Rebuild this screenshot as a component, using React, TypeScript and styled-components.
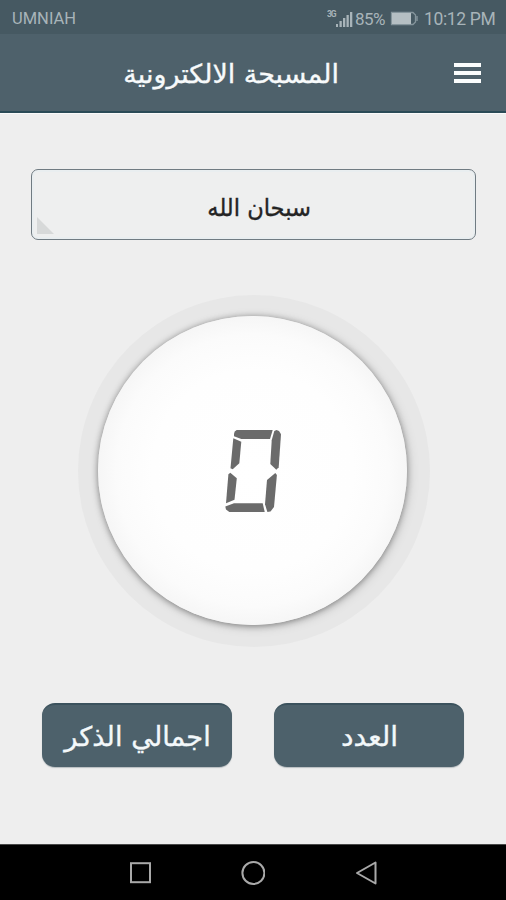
import React from "react";
import styled, { createGlobalStyle } from "styled-components";

const GlobalStyle = createGlobalStyle`
  *, *::before, *::after { box-sizing: border-box; }
  html, body { margin: 0; padding: 0; background: #eeeeee; }
  button { font: inherit; border: 0; padding: 0; margin: 0; background: none; }
`;

const Screen = styled.div`
  width: 506px;
  height: 900px;
  display: flex;
  flex-direction: column;
  overflow: hidden;
  background: #eeeeee;
  font-family: "DejaVu Sans", sans-serif;
`;

const StatusBar = styled.div`
  flex: 0 0 34px;
  display: flex;
  align-items: center;
  justify-content: space-between;
  padding: 3px 11px 0 12px;
  background: #465962;
  color: #a8b4b9;
  font-family: Roboto, sans-serif;
`;

const Carrier = styled.span`
  font-size: 16.5px;
  letter-spacing: 0;
`;

const Indicators = styled.div`
  display: flex;
  align-items: center;
  font-size: 17.5px;
`;

const Percent = styled.span`
  width: 31px;
  margin: 0 4px 0 1px;
  font-size: 17px;
  letter-spacing: -0.6px;
`;

const Clock = styled.span`
  width: 71px;
  margin-left: 5px;
  letter-spacing: -0.35px;
  white-space: nowrap;
`;

const Header = styled.header`
  flex: 0 0 79px;
  display: grid;
  grid-template-columns: 1fr 218px 114px 28px 24px;
  align-items: center;
  background: #4e616b;
  border-bottom: 2px solid #2b4b57;
  box-shadow: 0 1px 0 #fafafa;
`;

const ArabicText = styled.span<{ $size: number; $stretch?: number; $drop?: number }>`
  display: inline-block;
  font-size: ${(p) => p.$size}px;
  line-height: 1.2;
  white-space: nowrap;
  -webkit-text-stroke: 0.35px currentColor;
  transform: translateY(${(p) => p.$drop ?? 0}px) scaleX(${(p) => p.$stretch ?? 1});
`;

const Title = styled.h1`
  grid-column: 2;
  margin: 0;
  display: flex;
  justify-content: center;
  color: #f7fafb;
  font-weight: 400;
`;

const MenuButton = styled.button`
  grid-column: 4;
  height: 20px;
  display: flex;
  flex-direction: column;
  justify-content: space-between;
`;

const MenuLine = styled.span`
  width: 27px;
  height: 4px;
  background: #fbfdfd;
`;

const Main = styled.main`
  flex: 1;
  display: flex;
  flex-direction: column;
  align-items: center;
  padding-top: 56px;
`;

const Picker = styled.button`
  position: relative;
  width: 445px;
  height: 71px;
  display: flex;
  align-items: center;
  justify-content: center;
  padding-left: 12px;
  margin-left: 1px;
  border: 1.5px solid #707b82;
  border-radius: 7px;
  background: #eeefef;
  box-shadow: inset 0 0 0 2px #e9eef0;
  color: #242424;
`;

const PickerCorner = styled.span`
  position: absolute;
  left: 5px;
  bottom: 5px;
  width: 17px;
  height: 17px;
  background: #d7d9d9;
  clip-path: polygon(0 0, 100% 100%, 0 100%);
`;

const Dial = styled.div`
  width: 352px;
  height: 352px;
  margin: 55px 0 0 2px;
  display: flex;
  align-items: center;
  justify-content: center;
  padding: 0 3px 1px 0;
  border-radius: 50%;
  background: #e7e7e7;
`;

const DialFace = styled.button`
  width: 309px;
  height: 309px;
  display: flex;
  align-items: center;
  justify-content: center;
  padding-top: 3px;
  padding-left: 3px;
  border-radius: 50%;
  background: radial-gradient(circle closest-side, #ffffff 0%, #fefefe 65%, #fbfbfb 88%, #f6f6f6 100%);
  box-shadow: 0 1px 6px rgba(0, 0, 0, 0.4), 2px 2px 12px rgba(0, 0, 0, 0.14);
`;

const Readout = styled.span`
  display: grid;
  width: 60px;
  height: 88px;
`;

const Segment = styled.span<{ $shape: string }>`
  grid-area: 1 / 1;
  background: #6b6b6b;
  clip-path: polygon(${(p) => p.$shape});
`;

const Actions = styled.div`
  display: flex;
  gap: 42px;
  margin: 56px 0 0 0;
`;

const ActionButton = styled.button`
  width: 190px;
  height: 64px;
  display: flex;
  align-items: center;
  justify-content: center;
  border-radius: 13px;
  background: #4d616b;
  border-top: 2px solid #3b525d;
  box-shadow: 0 1px 1px rgba(60, 80, 90, 0.3);
  color: #f3f8fa;
`;

const NavBar = styled.nav`
  flex: 0 0 56px;
  display: grid;
  grid-template-columns: 24px 24px 24px;
  column-gap: 89px;
  justify-content: center;
  align-items: center;
  background: #000000;
  border-top: 1px solid #484848;
`;

const SEGMENTS: Record<string, string> = {
  top: "10px 5.7px, 10.7px 3.4px, 12.7px 2px, 48.7px 2px, 46px 11px, 17.3px 11px, 10px 8.3px",
  upperRight: "50.3px 3px, 52.5px 2px, 55px 3px, 57px 6.3px, 54.7px 39.3px, 52.3px 41.7px, 46.3px 36px, 47.7px 12.3px",
  upperLeft: "9.3px 10.3px, 17.3px 13.7px, 15.3px 35.3px, 8.7px 41.3px, 6.5px 40.3px",
  lowerLeft: "6.3px 44.8px, 12.8px 50.3px, 10.5px 71.7px, 2px 75.3px, 4.4px 46.3px",
  bottom: "1.3px 78.4px, 10px 75.3px, 38.7px 75.3px, 40.7px 84px, 5.3px 84px, 2px 81.5px",
  lowerRight: "51.3px 45px, 52.9px 47px, 50px 79px, 46.5px 83.4px, 43.4px 84px, 41px 76.3px, 43px 52px",
};

const ZERO = ["top", "upperRight", "upperLeft", "lowerLeft", "bottom", "lowerRight"];

function SignalIcon() {
  return (
    <svg width="27" height="20" viewBox="0 0 27 20" fill="currentColor">
      <text x="0" y="8" fontFamily="Roboto, sans-serif" fontSize="8.5" fontWeight="700" textLength="9.5">3G</text>
      <rect x="9" y="15" width="2" height="3" />
      <rect x="12.5" y="12" width="2.3" height="6" />
      <rect x="16" y="9" width="2.3" height="9" />
      <rect x="19.5" y="6" width="2.3" height="12" />
      <rect x="23" y="3" width="2.3" height="15" />
    </svg>
  );
}

function BatteryIcon() {
  return (
    <svg width="29" height="16" viewBox="0 0 29 16">
      <path d="M1.5 1.5H23L25.5 4V11L23 13.5H1.5Z" fill="none" stroke="#85959c" strokeWidth="1.3" />
      <path d="M2 2H21V13H2Z" fill="#b5bfc3" />
      <path d="M27 5V10" stroke="#8a9aa1" strokeWidth="1.3" />
    </svg>
  );
}

export default function App() {
  return (
    <Screen>
      <GlobalStyle />
      <StatusBar>
        <Carrier>UMNIAH</Carrier>
        <Indicators>
          <SignalIcon />
          <Percent>85%</Percent>
          <BatteryIcon />
          <Clock>10:12 PM</Clock>
        </Indicators>
      </StatusBar>
      <Header>
        <Title dir="rtl">
          <ArabicText $size={26} $stretch={1.035} $drop={2}>المسبحة الالكترونية</ArabicText>
        </Title>
        <MenuButton aria-label="القائمة">
          <MenuLine />
          <MenuLine />
          <MenuLine />
        </MenuButton>
      </Header>
      <Main>
        <Picker dir="rtl">
          <ArabicText $size={24} $stretch={0.94} $drop={4}>سبحان الله</ArabicText>
          <PickerCorner />
        </Picker>
        <Dial>
          <DialFace aria-label="0">
            <Readout>
              {ZERO.map((name) => (
                <Segment key={name} $shape={SEGMENTS[name]} />
              ))}
            </Readout>
          </DialFace>
        </Dial>
        <Actions>
          <ActionButton dir="rtl">
            <ArabicText $size={27} $stretch={1.01} $drop={1}>اجمالي الذكر</ArabicText>
          </ActionButton>
          <ActionButton dir="rtl">
            <ArabicText $size={27} $stretch={1.04} $drop={1}>العدد</ArabicText>
          </ActionButton>
        </Actions>
      </Main>
      <NavBar>
        <svg width="24" height="24" viewBox="0 0 24 24" fill="none" stroke="#a9a9a9" strokeWidth="2">
          <rect x="3" y="2.2" width="19" height="19" />
        </svg>
        <svg width="24" height="24" viewBox="0 0 24 24" fill="none" stroke="#a9a9a9" strokeWidth="2">
          <circle cx="12.4" cy="12" r="11" />
        </svg>
        <svg width="24" height="24" viewBox="0 0 24 24" fill="none" stroke="#a9a9a9" strokeWidth="2" strokeLinejoin="round">
          <path d="M21.5 1.5V22.5L3 12Z" />
        </svg>
      </NavBar>
    </Screen>
  );
}
